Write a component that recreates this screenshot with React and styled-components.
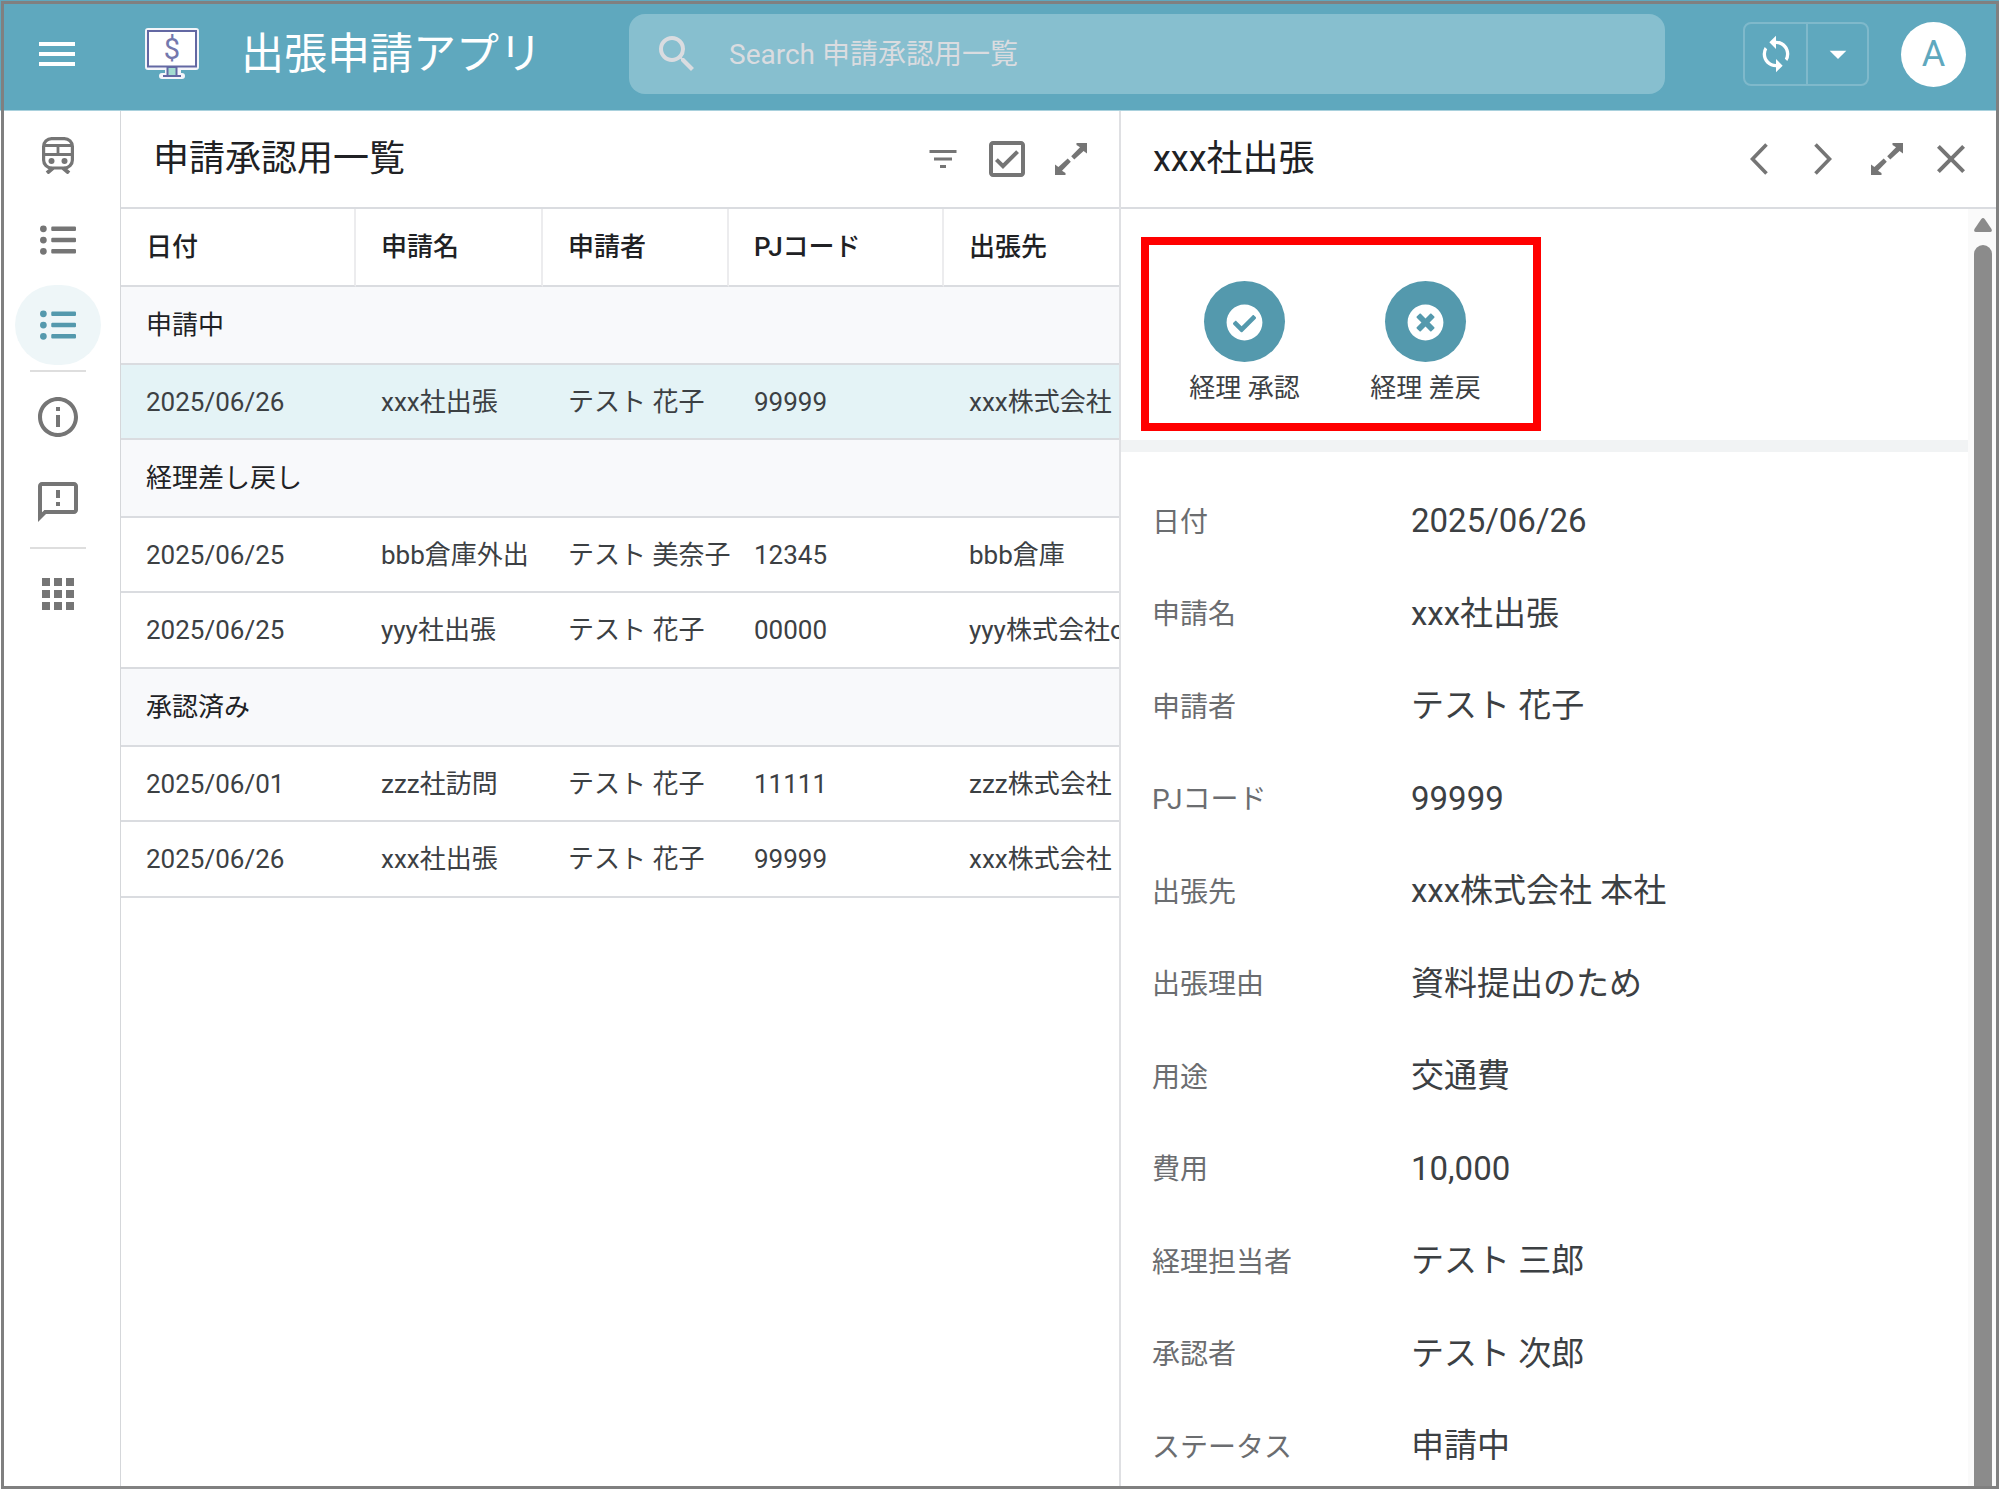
import styled, { createGlobalStyle } from 'styled-components';
import {
  MdMenu,
  MdSearch,
  MdSync,
  MdArrowDropDown,
  MdFilterList,
  MdOutlineCheckBox,
  MdClose,
  MdOutlineInfo,
  MdOutlineFeedback,
  MdApps,
} from 'react-icons/md';
import { FaListUl, FaCheckCircle, FaTimesCircle } from 'react-icons/fa';

const columns = ['日付', '申請名', '申請者', 'PJコード', '出張先'];

const groups = [
  {
    name: '申請中',
    rows: [{ cells: ['2025/06/26', 'xxx社出張', 'テスト 花子', '99999', 'xxx株式会社'], selected: true }],
  },
  {
    name: '経理差し戻し',
    rows: [
      { cells: ['2025/06/25', 'bbb倉庫外出', 'テスト 美奈子', '12345', 'bbb倉庫'] },
      { cells: ['2025/06/25', 'yyy社出張', 'テスト 花子', '00000', 'yyy株式会社o'] },
    ],
  },
  {
    name: '承認済み',
    rows: [
      { cells: ['2025/06/01', 'zzz社訪問', 'テスト 花子', '11111', 'zzz株式会社'] },
      { cells: ['2025/06/26', 'xxx社出張', 'テスト 花子', '99999', 'xxx株式会社'] },
    ],
  },
];

const fields = [
  ['日付', '2025/06/26'],
  ['申請名', 'xxx社出張'],
  ['申請者', 'テスト 花子'],
  ['PJコード', '99999'],
  ['出張先', 'xxx株式会社 本社'],
  ['出張理由', '資料提出のため'],
  ['用途', '交通費'],
  ['費用', '10,000'],
  ['経理担当者', 'テスト 三郎'],
  ['承認者', 'テスト 次郎'],
  ['ステータス', '申請中'],
];

const LogoIcon = () => (
  <svg width="54" height="52" viewBox="0 0 54 52" aria-hidden="true">
    <path
      d="M3 0h48a3 3 0 0 1 3 3v36a3 3 0 0 1-3 3H36v3h1a3 3 0 0 1 0 6H17a3 3 0 0 1 0-6h3v-3H3a3 3 0 0 1-3-3V3a3 3 0 0 1 3-3z"
      fill="#f4f5fa"
    />
    <rect x="22.5" y="39" width="9" height="9" fill="#a3dcd0" stroke="#6368a3" strokeWidth="2" />
    <rect x="3" y="3" width="48" height="35.5" fill="#fff" stroke="#6368a3" strokeWidth="2" />
    <path d="M18 48h18" stroke="#6368a3" strokeWidth="2" />
    <text x="27" y="31" textAnchor="middle" fontFamily="Roboto" fontSize="29" fill="#7478ad">
      $
    </text>
  </svg>
);

const TrainIcon = () => (
  <svg width="32" height="37" viewBox="0 0 32 37" fill="none" stroke="currentColor" aria-hidden="true">
    <rect x="1.6" y="1.6" width="28.8" height="29.400" rx="8" strokeWidth="3.2" />
    <path d="M2 8.500h28M2 17.500h28M16 8.500v9" strokeWidth="2.800" />
    <path d="M11 31l-6 5M21 31l6 5" strokeWidth="4" />
    <circle cx="9.500" cy="24" r="3" fill="currentColor" stroke="none" />
    <circle cx="22.500" cy="24" r="3" fill="currentColor" stroke="none" />
  </svg>
);

const ExpandIcon = () => (
  <svg width="32" height="32" viewBox="0 0 32 32" fill="currentColor" aria-hidden="true">
    <path d="M21.5 0H32v10.5L28.6 8 19.3 16.4 16.2 13.2 25 4.2 21.5 2z" />
    <path d="M10.5 32H0V21.5L3.4 24 12.7 15.6 15.8 18.8 7 27.8 10.5 30z" />
  </svg>
);

const ChevronIcon = ({ points }) => (
  <svg width="18" height="32" viewBox="0 0 18 32" fill="none" stroke="currentColor" strokeWidth="3.6" aria-hidden="true">
    <polyline points={points} />
  </svg>
);

const App = () => {
  return (
    <Page>
      <GlobalStyle />
      <Header>
        <IconButton aria-label="メニュー">
          <MdMenu size={48} />
        </IconButton>
        <Brand>
          <LogoIcon />
          <BrandName>出張申請アプリ</BrandName>
        </Brand>
        <SearchBox>
          <MdSearch size={48} />
          <SearchInput type="search" aria-label="Search" placeholder="Search 申請承認用一覧" />
        </SearchBox>
        <SyncGroup>
          <SyncButton aria-label="同期">
            <MdSync size={40} />
          </SyncButton>
          <SyncButton aria-label="同期オプション">
            <MdArrowDropDown size={40} />
          </SyncButton>
        </SyncGroup>
        <Avatar aria-label="アカウント">A</Avatar>
      </Header>

      <Content>
        <Sidebar>
          <NavLink href="#trips" aria-label="出張">
            <TrainIcon />
          </NavLink>
          <NavLink href="#requests" aria-label="申請一覧">
            <FaListUl size={36} />
          </NavLink>
          <NavLink href="#approvals" aria-label="申請承認用一覧" $active>
            <FaListUl size={36} />
          </NavLink>
          <NavDivider />
          <NavLink href="#about" aria-label="情報">
            <MdOutlineInfo size={48} />
          </NavLink>
          <NavLink href="#feedback" aria-label="フィードバック">
            <MdOutlineFeedback size={48} />
          </NavLink>
          <NavDivider />
          <NavLink href="#apps" aria-label="アプリ">
            <MdApps size={48} />
          </NavLink>
        </Sidebar>

        <ListPanel>
          <PanelHeader>
            <PanelTitle>申請承認用一覧</PanelTitle>
            <Tools>
              <ToolButton aria-label="フィルター">
                <MdFilterList size={36} />
              </ToolButton>
              <ToolButton aria-label="選択">
                <MdOutlineCheckBox size={48} />
              </ToolButton>
              <ToolButton aria-label="拡大">
                <ExpandIcon />
              </ToolButton>
            </Tools>
          </PanelHeader>
          <Table>
            <colgroup>
              <Column $width={235} />
              <Column $width={187} />
              <Column $width={186} />
              <Column $width={215} />
              <col />
            </colgroup>
            <thead>
              <tr>
                {columns.map((column) => (
                  <HeadCell key={column} scope="col">
                    {column}
                  </HeadCell>
                ))}
              </tr>
            </thead>
            {groups.map((group) => (
              <tbody key={group.name}>
                <tr>
                  <GroupCell colSpan={5} scope="rowgroup">
                    {group.name}
                  </GroupCell>
                </tr>
                {group.rows.map((row, index) => (
                  <Row key={index} $selected={row.selected}>
                    {row.cells.map((cell, i) => (
                      <td key={i}>{cell}</td>
                    ))}
                  </Row>
                ))}
              </tbody>
            ))}
          </Table>
        </ListPanel>

        <DetailPanel>
          <PanelHeader>
            <PanelTitle>xxx社出張</PanelTitle>
            <Tools>
              <ToolButton aria-label="前へ">
                <ChevronIcon points="16.5,1.5 2.5,16 16.5,30.5" />
              </ToolButton>
              <ToolButton aria-label="次へ">
                <ChevronIcon points="1.5,1.5 15.5,16 1.5,30.5" />
              </ToolButton>
              <ToolButton aria-label="拡大">
                <ExpandIcon />
              </ToolButton>
              <ToolButton aria-label="閉じる">
                <MdClose size={48} />
              </ToolButton>
            </Tools>
          </PanelHeader>
          <DetailScroll>
            <DetailBody>
              <Actions>
                <ActionButton>
                  <ActionCircle>
                    <FaCheckCircle size={37} />
                  </ActionCircle>
                  経理 承認
                </ActionButton>
                <ActionButton>
                  <ActionCircle>
                    <FaTimesCircle size={37} />
                  </ActionCircle>
                  経理 差戻
                </ActionButton>
              </Actions>
              <Band />
              <Fields>
                {fields.map(([label, value]) => (
                  <Field key={label}>
                    <FieldLabel>{label}</FieldLabel>
                    <FieldValue>{value}</FieldValue>
                  </Field>
                ))}
              </Fields>
            </DetailBody>
            <ScrollTrack>
              <svg width="18" height="14" viewBox="0 0 18 14" fill="#8b8b8b" aria-hidden="true">
                <path d="M7.3 1Q9-.8 10.7 1L17.5 11Q18.500 14 16 14H2Q-.5 14 .5 11z" />
              </svg>
              <ScrollThumb />
            </ScrollTrack>
          </DetailScroll>
        </DetailPanel>
      </Content>
    </Page>
  );
};

export default App;

const GlobalStyle = createGlobalStyle`
  * {
    box-sizing: border-box;
  }
  body {
    margin: 0;
    color: #3c4043;
    background: #fff;
    font-family: Roboto, 'Noto Sans CJK JP', sans-serif;
    font-size: 26px;
  }
  button, input {
    font: inherit;
    color: inherit;
    border: 0;
    padding: 0;
    background: none;
  }
  svg {
    display: block;
    flex-shrink: 0;
  }
`;

const Page = styled.div`
  height: 100vh;
  display: flex;
  flex-direction: column;
  overflow: hidden;

  /* window frame */
  &::after {
    content: '';
    position: fixed;
    inset: 1px 0 0 1px;
    border: 3px solid #808080;
    pointer-events: none;
  }
`;

const Header = styled.header`
  height: 111px;
  flex-shrink: 0;
  display: flex;
  align-items: center;
  padding: 0 33px 2px;
  color: #fff;
  background: #5fa8be;
  border-bottom: 1px solid #a9d1dd;
`;

const IconButton = styled.button`
  display: flex;
  align-items: center;
  justify-content: center;
  cursor: pointer;
`;

const Brand = styled.div`
  display: flex;
  align-items: center;
  gap: 42px;
  margin: 0 87px 0 64px;
`;

const BrandName = styled.h1`
  margin: 0;
  font-size: 43px;
  font-weight: 400;
  line-height: 64px;
  padding-bottom: 1px;
  white-space: nowrap;
`;

const SearchBox = styled.div`
  flex: 1;
  height: 80px;
  display: flex;
  align-items: center;
  gap: 28px;
  padding: 0 24px;
  border-radius: 16px;
  color: #dadce0;
  background: #87bfcf;
`;

const SearchInput = styled.input`
  flex: 1;
  min-width: 0;
  height: 48px;
  font-size: 28px;
  outline: none;

  &::placeholder {
    color: #dadce0;
    opacity: 1;
  }
`;

const SyncGroup = styled.div`
  display: flex;
  height: 64px;
  margin: 0 32px 0 78px;
  border: 2px solid #7fb9cb;
  border-radius: 8px;
`;

const SyncButton = styled.button`
  width: 61px;
  display: flex;
  align-items: center;
  justify-content: center;

  & + & {
    border-left: 2px solid #7fb9cb;
  }
`;

const Avatar = styled.button`
  width: 65px;
  height: 65px;
  border-radius: 50%;
  font-size: 36px;
  line-height: 65px;
  color: #5fa8be;
  background: #fff;
`;

const Content = styled.div`
  flex: 1;
  min-height: 0;
  display: grid;
  grid-template-columns: 121px minmax(0, 1000fr) minmax(0, 878fr);
`;

const Sidebar = styled.nav`
  display: flex;
  flex-direction: column;
  align-items: center;
  gap: 5px;
  padding: 4px 5px 0 0;
  border-right: 1px solid #d5d7da;
`;

const NavLink = styled.a`
  width: 86px;
  height: 80px;
  display: flex;
  align-items: center;
  justify-content: center;
  border-radius: 40px;
  color: ${(props) => (props.$active ? '#5499ad' : '#757575')};
  background: ${(props) => (props.$active ? '#eef6f8' : 'none')};
`;

const NavDivider = styled.div`
  width: 56px;
  height: 2px;
  background: #dedede;
`;

const ListPanel = styled.main`
  overflow: hidden;
  border-right: 2px solid #dfe0e3;
`;

const PanelHeader = styled.div`
  height: 98px;
  flex-shrink: 0;
  display: flex;
  align-items: center;
  justify-content: space-between;
  padding: 0 16px 0 32px;
  border-bottom: 2px solid #dadce0;
`;

const PanelTitle = styled.h2`
  margin: 0;
  font-size: 36px;
  font-weight: 400;
  line-height: 52px;
  color: #202124;
  white-space: nowrap;
`;

const Tools = styled.div`
  display: flex;
  color: #757575;
`;

const ToolButton = styled(IconButton)`
  width: 64px;
  height: 64px;
`;

const Table = styled.table`
  width: 100%;
  table-layout: fixed;
  border-collapse: separate;
  border-spacing: 0;
  line-height: 38px;
  white-space: nowrap;

  th, td {
    padding: 0 0 0 25px;
    text-align: left;
    border-bottom: 2px solid #dadce0;
  }
`;

const Column = styled.col`
  width: ${(props) => props.$width}px;
`;

const HeadCell = styled.th`
  height: 78px;
  font-weight: 500;
  color: #202124;

  &:not(:last-child) {
    border-right: 2px solid #ececee;
  }
`;

const GroupCell = styled.th`
  height: 78px;
  font-weight: 400;
  color: #202124;
  background: #f8f9fb;
`;

const Row = styled.tr`
  height: 75px;
  background: ${(props) => (props.$selected ? '#e4f3f6' : '#fff')};

  & + & {
    height: 76px;
  }
`;

const DetailPanel = styled.aside`
  display: flex;
  flex-direction: column;
  min-height: 0;
`;

const DetailScroll = styled.div`
  flex: 1;
  min-height: 0;
  display: flex;
  overflow: hidden;
`;

const DetailBody = styled.div`
  flex: 1;
  min-width: 0;
`;

const Actions = styled.div`
  width: 400px;
  height: 194px;
  display: flex;
  margin: 28px 0 9px 20px;
  padding: 36px 17px 0 5px;
  border: 8px solid #ff0000;
`;

const ActionButton = styled.button`
  flex: 1;
  display: flex;
  flex-direction: column;
  align-items: center;
  gap: 8px;
  line-height: 36px;
  cursor: pointer;
`;

const ActionCircle = styled.span`
  width: 81px;
  height: 81px;
  display: flex;
  align-items: center;
  justify-content: center;
  padding-top: 2px;
  border-radius: 50%;
  color: #fff;
  background: #5499ad;
`;

const Band = styled.div`
  height: 12px;
  background: #f1f3f4;
`;

const Fields = styled.dl`
  display: grid;
  grid-auto-rows: 92px 93px;
  margin: 0;
  padding: 24px 32px 0 31px;
`;

const Field = styled.div`
  display: grid;
  grid-template-columns: 259px 1fr;
  align-items: center;
`;

const FieldLabel = styled.dt`
  padding-top: 1px;
  font-size: 28px;
  line-height: 42px;
  color: #6b6d70;
`;

const FieldValue = styled.dd`
  margin: 0;
  padding-bottom: 2px;
  font-size: 33px;
  line-height: 42px;
`;

const ScrollTrack = styled.div`
  width: 31px;
  display: flex;
  flex-direction: column;
  gap: 13px;
  padding: 9px 7px 0 6px;
  background: #fafafa;
`;

const ScrollThumb = styled.div`
  flex: 1;
  border-radius: 9px 9px 0 0;
  background: #8b8b8b;
`;
